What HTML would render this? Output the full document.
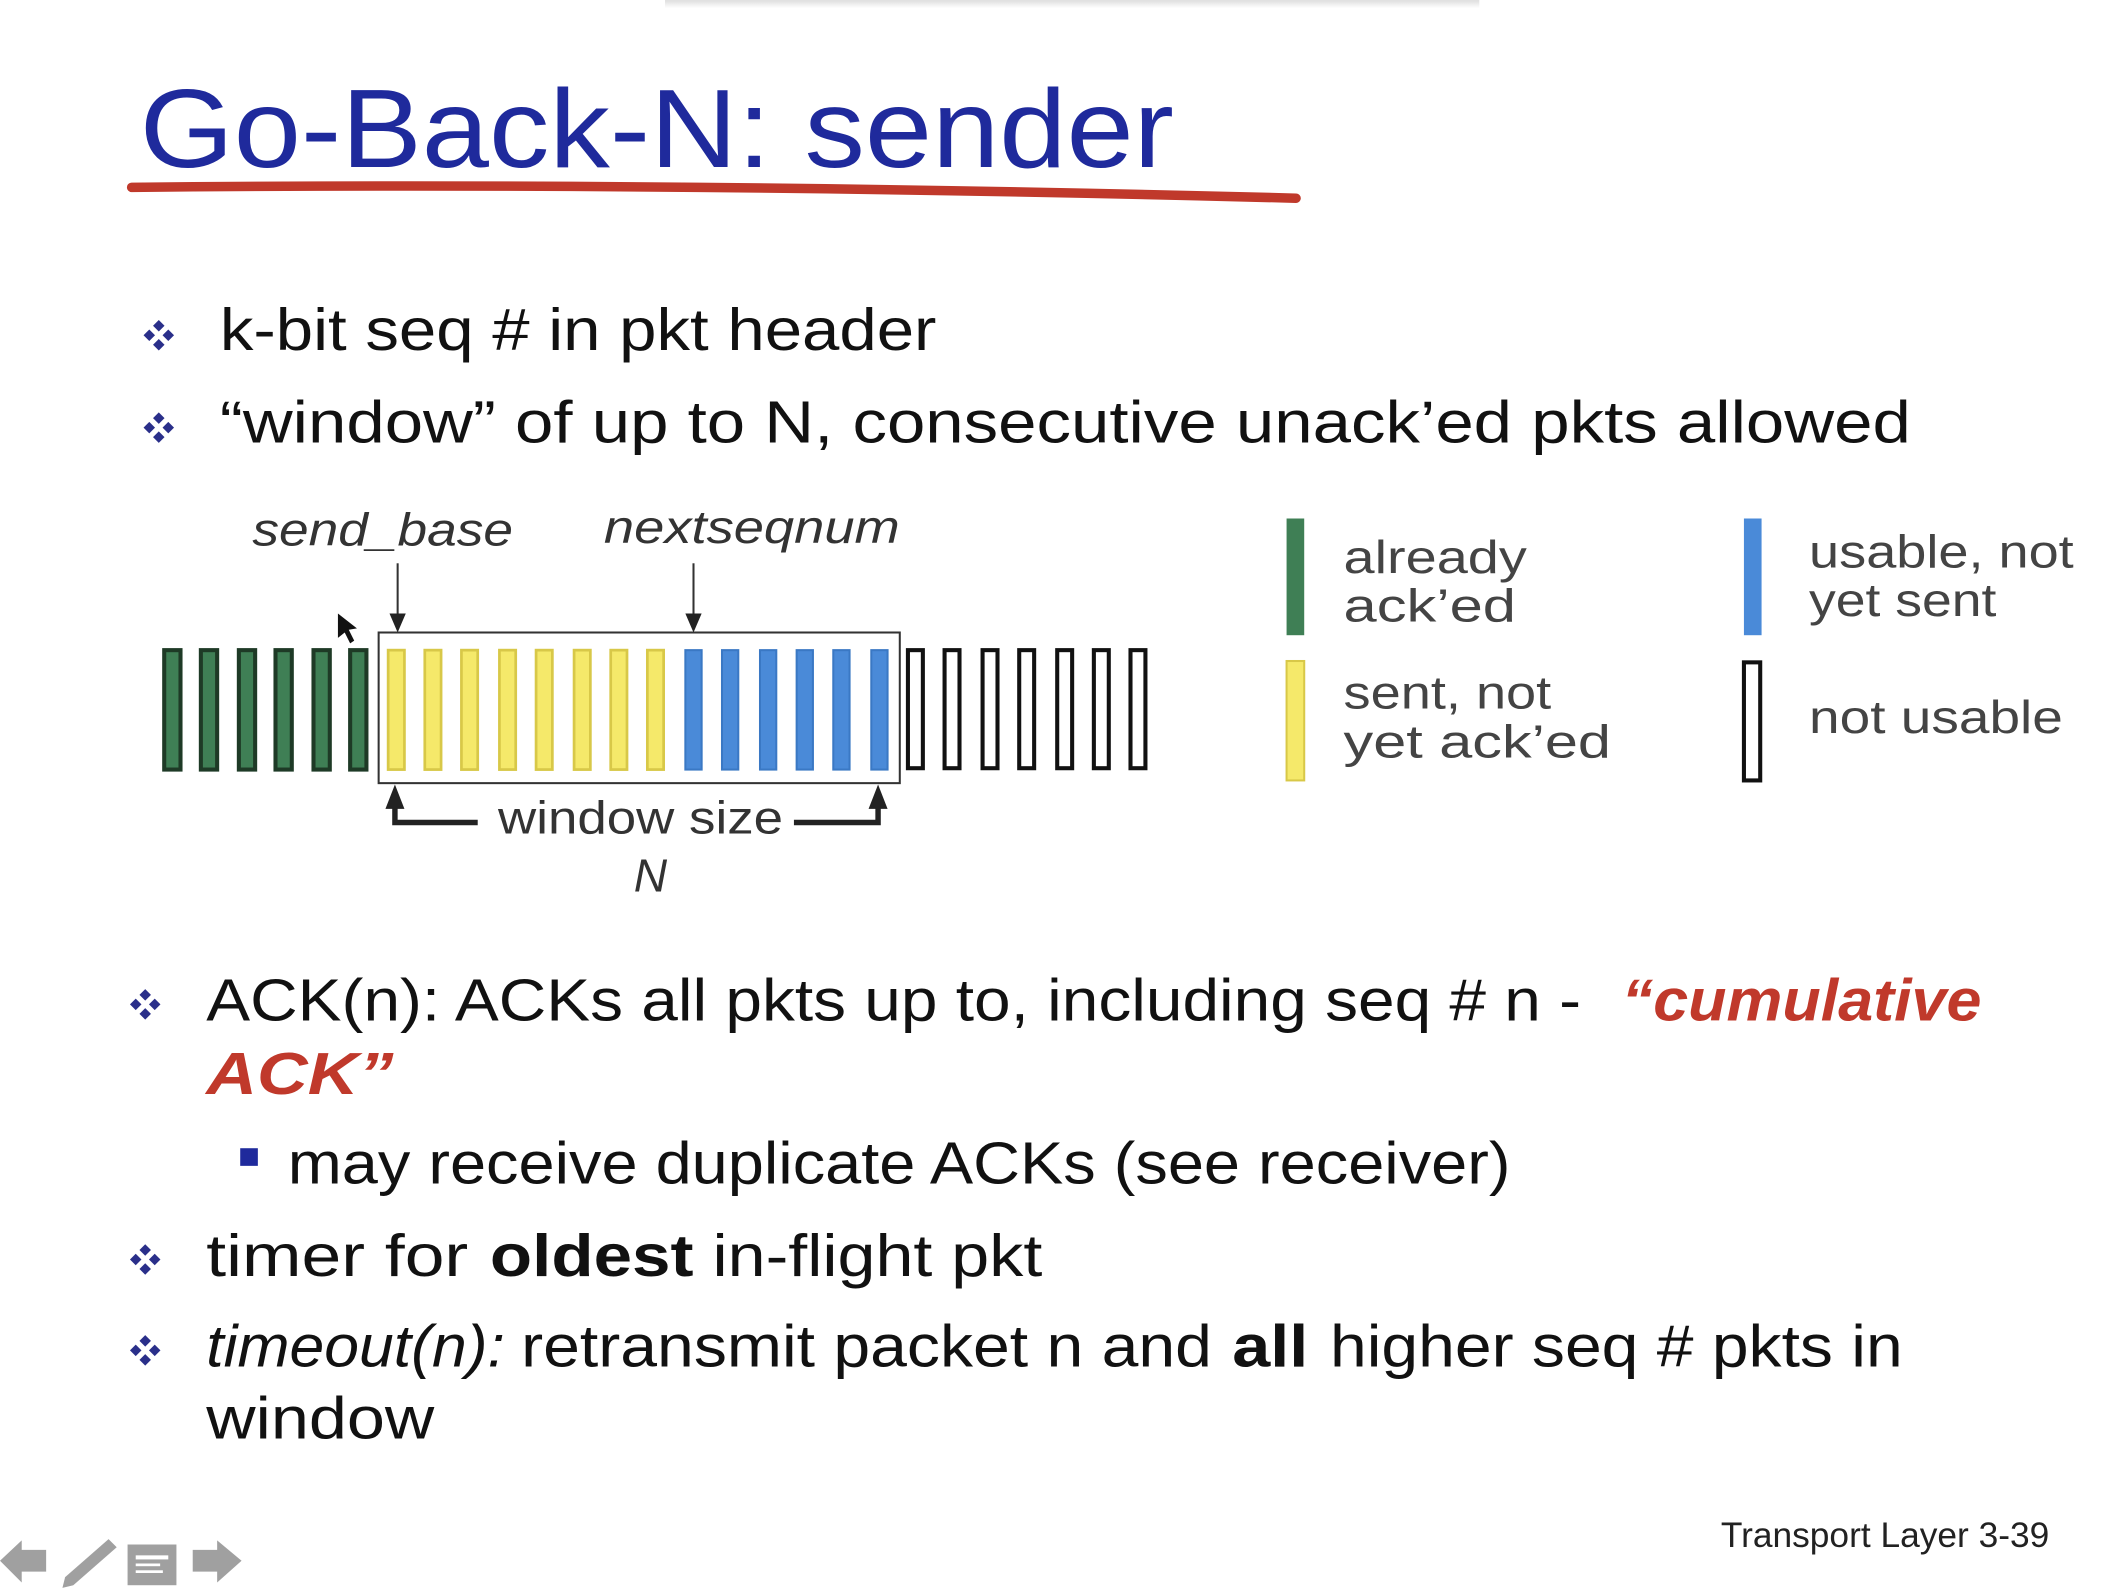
<!DOCTYPE html>
<html><head><meta charset="utf-8"><style>
html,body{margin:0;padding:0;background:#fff;width:2128px;height:1588px;overflow:hidden}
svg{display:block}
</style></head><body>
<svg width="2128" height="1588" viewBox="0 0 1568 1170" xmlns="http://www.w3.org/2000/svg" font-family="Liberation Sans, sans-serif">
<defs>
<linearGradient id="sh" x1="0" y1="0" x2="0" y2="1"><stop offset="0" stop-color="#ddd"/><stop offset="1" stop-color="#fff"/></linearGradient>
<g id="bul" fill="#2a2f8a">
<rect x="-3" y="-10" width="6" height="6" transform="rotate(45 0 -7)"/>
<rect x="-3" y="4" width="6" height="6" transform="rotate(45 0 7)"/>
<rect x="-10" y="-3" width="6" height="6" transform="rotate(45 -7 0)"/>
<rect x="4" y="-3" width="6" height="6" transform="rotate(45 7 0)"/>
</g>
</defs>
<rect x="490" y="0" width="600" height="6" fill="url(#sh)"/>
<text x="103" y="123" font-size="82" fill="#1f2a9c" textLength="762" lengthAdjust="spacingAndGlyphs">Go-Back-N: sender</text>
<path d="M97 138 Q500 134 955 146" stroke="#c0392b" stroke-width="7" fill="none" stroke-linecap="round"/>

<use href="#bul" x="117" y="247"/>
<text x="162" y="258" font-size="44" fill="#111" textLength="528" lengthAdjust="spacingAndGlyphs">k-bit seq # in pkt header</text>
<use href="#bul" x="117" y="315"/>
<text x="162" y="326" font-size="44" fill="#111" textLength="1246" lengthAdjust="spacingAndGlyphs">“window” of up to N, consecutive unack’ed pkts allowed</text>

<g font-style="italic" fill="#333" font-size="34">
<text x="186" y="402" textLength="192" lengthAdjust="spacingAndGlyphs">send_base</text>
<text x="445" y="400" textLength="218" lengthAdjust="spacingAndGlyphs">nextseqnum</text>
<text x="467" y="657">N</text>
</g>
<text x="367" y="614" font-size="34" fill="#333" textLength="210" lengthAdjust="spacingAndGlyphs">window size</text>
<g stroke="#333" stroke-width="1.5"><line x1="293" y1="415" x2="293" y2="455"/><line x1="511" y1="415" x2="511" y2="455"/></g>
<path d="M287 452 L293 466 L299 452Z M505 452 L511 466 L517 452Z" fill="#222"/>
<path d="M291 590 V606 H352 M647 590 V606 H585" stroke="#222" stroke-width="4" fill="none"/>
<path d="M284 596 L291 578 L298 596Z M640 596 L647 578 L654 596Z" fill="#222"/>
<g stroke-width="3">
<rect x="121" y="479" width="12" height="88" fill="#3f7f55" stroke="#1e3a26"/>
<rect x="148" y="479" width="12" height="88" fill="#3f7f55" stroke="#1e3a26"/>
<rect x="176" y="479" width="12" height="88" fill="#3f7f55" stroke="#1e3a26"/>
<rect x="203" y="479" width="12" height="88" fill="#3f7f55" stroke="#1e3a26"/>
<rect x="231" y="479" width="12" height="88" fill="#3f7f55" stroke="#1e3a26"/>
<rect x="258" y="479" width="12" height="88" fill="#3f7f55" stroke="#1e3a26"/>
</g>
<rect x="279" y="466" width="384" height="111" fill="none" stroke="#333" stroke-width="1.5"/>
<g fill="#f5e96a" stroke="#d8c848" stroke-width="2">
<rect x="286" y="479" width="12" height="88"/><rect x="313" y="479" width="12" height="88"/><rect x="340" y="479" width="12" height="88"/><rect x="368" y="479" width="12" height="88"/><rect x="395" y="479" width="12" height="88"/><rect x="423" y="479" width="12" height="88"/><rect x="450" y="479" width="12" height="88"/><rect x="477" y="479" width="12" height="88"/>
</g>
<g fill="#4a8ad8" stroke="#3a78c4" stroke-width="1.5">
<rect x="505" y="479" width="12" height="88"/><rect x="532" y="479" width="12" height="88"/><rect x="560" y="479" width="12" height="88"/><rect x="587" y="479" width="12" height="88"/><rect x="614" y="479" width="12" height="88"/><rect x="642" y="479" width="12" height="88"/>
</g>
<g fill="#fff" stroke="#111" stroke-width="3">
<rect x="669" y="479" width="11" height="87"/><rect x="696" y="479" width="11" height="87"/><rect x="724" y="479" width="11" height="87"/><rect x="751" y="479" width="11" height="87"/><rect x="779" y="479" width="11" height="87"/><rect x="806" y="479" width="11" height="87"/><rect x="833" y="479" width="11" height="87"/>
</g>
<path d="M249 452 L249 470 L254 466 L258 474 L261 472 L257 464 L263 463Z" fill="#111"/>

<rect x="948" y="382" width="13" height="86" fill="#3f7f55"/>
<rect x="948" y="487" width="13" height="88" fill="#f5e96a" stroke="#d8c848" stroke-width="1.5"/>
<rect x="1285" y="382" width="13" height="86" fill="#4a8ad8"/>
<rect x="1285" y="488" width="12" height="87" fill="#fff" stroke="#111" stroke-width="3"/>
<g font-size="34" fill="#444">
<text x="990" y="422" textLength="135" lengthAdjust="spacingAndGlyphs">already</text>
<text x="990" y="458" textLength="127" lengthAdjust="spacingAndGlyphs">ack’ed</text>
<text x="990" y="522" textLength="153" lengthAdjust="spacingAndGlyphs">sent, not</text>
<text x="990" y="558" textLength="197" lengthAdjust="spacingAndGlyphs">yet ack’ed</text>
<text x="1333" y="418" textLength="195" lengthAdjust="spacingAndGlyphs">usable, not</text>
<text x="1333" y="454" textLength="138" lengthAdjust="spacingAndGlyphs">yet sent</text>
<text x="1333" y="540" textLength="187" lengthAdjust="spacingAndGlyphs">not usable</text>
</g>

<use href="#bul" x="107" y="740"/>
<text x="152" y="752" font-size="44" fill="#111" textLength="1013" lengthAdjust="spacingAndGlyphs">ACK(n): ACKs all pkts up to, including seq # n -</text>
<text x="1195" y="752" font-size="44" fill="#c0392b" font-weight="bold" font-style="italic" textLength="265" lengthAdjust="spacingAndGlyphs">“cumulative</text>
<text x="152" y="806" font-size="44" fill="#c0392b" font-weight="bold" font-style="italic" textLength="138" lengthAdjust="spacingAndGlyphs">ACK”</text>
<rect x="177" y="846" width="13" height="13" fill="#1f2a9c"/>
<text x="212" y="872" font-size="44" fill="#111" textLength="901" lengthAdjust="spacingAndGlyphs">may receive duplicate ACKs (see receiver)</text>
<use href="#bul" x="107" y="928"/>
<text x="152" y="940" font-size="44" fill="#111" textLength="193" lengthAdjust="spacingAndGlyphs">timer for</text>
<text x="361" y="940" font-size="44" fill="#111" font-weight="bold" textLength="150" lengthAdjust="spacingAndGlyphs">oldest</text>
<text x="525" y="940" font-size="44" fill="#111" textLength="243" lengthAdjust="spacingAndGlyphs">in-flight pkt</text>
<use href="#bul" x="107" y="995"/>
<text x="152" y="1007" font-size="44" fill="#111" font-style="italic" textLength="220" lengthAdjust="spacingAndGlyphs">timeout(n):</text>
<text x="384" y="1007" font-size="44" fill="#111" textLength="509" lengthAdjust="spacingAndGlyphs">retransmit packet n and</text>
<text x="908" y="1007" font-size="44" fill="#111" font-weight="bold" textLength="56" lengthAdjust="spacingAndGlyphs">all</text>
<text x="980" y="1007" font-size="44" fill="#111" textLength="422" lengthAdjust="spacingAndGlyphs">higher seq # pkts in</text>
<text x="152" y="1060" font-size="44" fill="#111" textLength="168" lengthAdjust="spacingAndGlyphs">window</text>

<text x="1268" y="1140" font-size="26" fill="#222" textLength="242" lengthAdjust="spacingAndGlyphs">Transport Layer 3-39</text>

<g fill="#a0a0a0">
<path d="M0 1150 L16 1135 L16 1142 L34 1142 L34 1158 L16 1158 L16 1166Z"/>
<path d="M80 1134 L86 1140 L54 1168 L46 1170 L48 1162Z"/>
<rect x="94" y="1138" width="36" height="30"/>
<path d="M142 1142 L160 1142 L160 1135 L178 1150 L160 1166 L160 1158 L142 1158Z"/>
</g>
<g fill="#fff"><rect x="100" y="1146" width="24" height="3"/><rect x="100" y="1152" width="18" height="2"/><rect x="100" y="1157" width="20" height="2"/></g>
</svg>
</body></html>
